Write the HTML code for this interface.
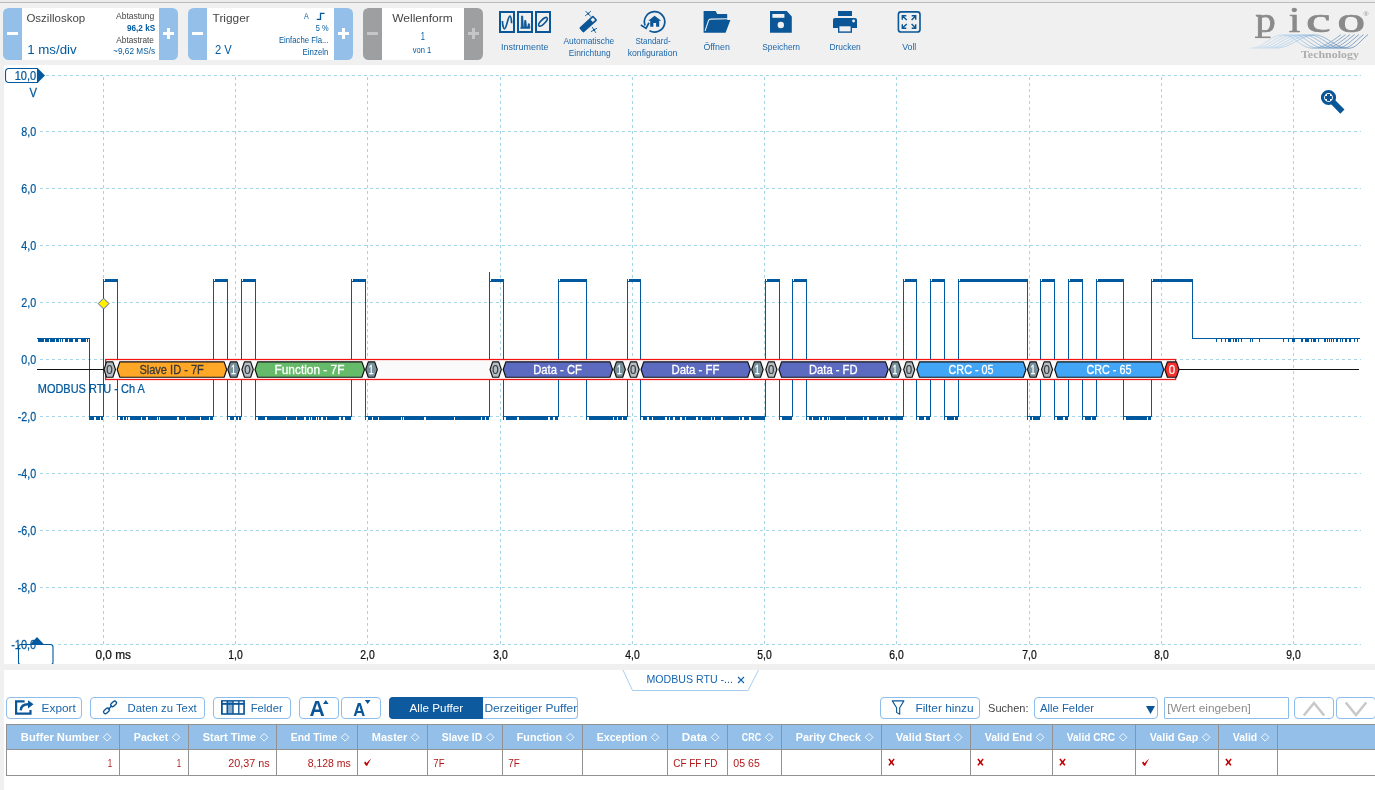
<!DOCTYPE html>
<html><head><meta charset="utf-8"><title>PicoScope</title>
<style>
html,body{margin:0;padding:0}
body{width:1375px;height:790px;background:#f0f0f0;position:relative;overflow:hidden;font-family:"Liberation Sans",sans-serif;}
.abs{position:absolute}
.tb{position:absolute;top:8px;height:52px;background:#fff;border-radius:5.500px;overflow:hidden}
.tb .l,.tb .r{position:absolute;top:0;bottom:0;width:19px;background:#93bfe8}
.tb .l{left:0}.tb .r{right:0}
.tb.g .l,.tb.g .r{background:#9e9fa1}
.tb i{position:absolute;background:#fff;display:block}
.tb.g i{background:#c6c6c6}
.btn{position:absolute;top:697px;height:20px;border:1px solid #8dbdea;border-radius:4px;background:#fff;box-sizing:content-box}
</style></head><body>

<div class="abs" style="left:0;top:0;width:1375px;height:2px;background:#ececec"></div>
<div class="abs" style="left:0;top:2px;width:1375px;height:1px;background:#bcbcbc"></div>
<div class="tb" style="left:3px;width:175px"><div class="l"></div><div class="r"></div>
<i style="left:4px;top:24px;width:11px;height:3px"></i>
<i style="left:160px;top:24.200px;width:11px;height:2.800px"></i><i style="left:164px;top:20.100px;width:3px;height:10.900px"></i></div>
<div class="tb" style="left:188px;width:165px"><div class="l"></div><div class="r"></div>
<i style="left:4px;top:24px;width:11px;height:3px"></i>
<i style="left:150px;top:24.200px;width:11px;height:2.800px"></i><i style="left:154px;top:20.100px;width:3px;height:10.900px"></i></div>
<div class="tb g" style="left:363px;width:120px"><div class="l"></div><div class="r"></div>
<i style="left:4px;top:24px;width:11px;height:3px"></i>
<i style="left:105px;top:24.200px;width:11px;height:2.800px"></i><i style="left:109px;top:20.100px;width:3px;height:10.900px"></i></div>
<svg class="abs" style="left:315px;top:11px" width="12" height="11" viewBox="0 0 12 11"><path d="M1.800 8.300H5.500V2.300H9.500" fill="none" stroke="#00599e" stroke-width="1.300"/></svg>
<svg class="abs" style="left:499px;top:10px" width="52" height="24" viewBox="0 0 52 24">
<g fill="none" stroke="#0b5697" stroke-width="2">
<rect x="1" y="2" width="14" height="20"/><rect x="19" y="2" width="14" height="20"/><rect x="37" y="2" width="14" height="20"/>
<path d="M3.400 11 C3.600 16,4.600 18.800,5.500 18.800 C7.500 18.800,9 6.200,10.900 6.200 C12 6.200,12.400 9,12.600 13.300" stroke-width="1.700"/>
<path d="M21.600 18.300 L22.300 17 L22.500 6 L23.700 6 L24.300 17 L25.400 17.200 L25.700 10.500 L26.900 10.500 L27.400 17 L28.800 17 L29.300 13.800 L30.400 13.800 L30.900 18.300 Z" stroke-width="0.800" fill="#0b5697" stroke-linejoin="round"/>
<ellipse cx="44" cy="11.800" rx="2.100" ry="5.700" transform="rotate(45 44 11.800)" stroke-width="1.600"/>
</g></svg>
<svg class="abs" style="left:570px;top:0" width="40" height="40" viewBox="570 0 40 40">
<g transform="translate(588.200,24.100) rotate(-42.300)"><rect x="-9.450" y="-3.250" width="18.900" height="6.500" rx="1.100" fill="#0b5697"/><rect x="4.700" y="-1.600" width="3.200" height="3.200" fill="#f0f0f0"/></g>
<g stroke="#0b5697" stroke-width="0.900" fill="#0b5697" stroke-linecap="round">
<path d="M585.800 11.300L590.600 16.300M590.600 11.500L585.400 15.700"/><circle cx="588.200" cy="13.800" r="1.050" stroke="none"/>
<path d="M592.300 27.300L595.600 32.500M596.700 28.400L591.300 31.500"/><circle cx="594.100" cy="29.900" r="1.050" stroke="none"/>
</g></svg>
<svg class="abs" style="left:635px;top:0" width="40" height="40" viewBox="635 0 40 40">
<path d="M649.350 30.640A10.200 10.200 0 1 0 645.080 25.560" fill="none" stroke="#0b5697" stroke-width="1.700"/>
<path d="M640.850 25.040L646.060 28.400L648.990 22.750" fill="none" stroke="#0b5697" stroke-width="1.700"/>
<path d="M654.600 15.700L648.200 20.800H650.200V26.700H653.400V22.950H656.100V26.700H659.200V20.800H661.200Z" fill="#0b5697"/>
</svg>
<svg class="abs" style="left:696px;top:0" width="40" height="40" viewBox="696 0 40 40">
<path d="M703.600 11H715.600L717.200 14H727.200V20H730.400L725.600 32.800H703.600Z" fill="#0b5697"/>
<path d="M705.100 30.800L708.500 20.600Q709 19.100 710.600 19.100L727.600 18.700" fill="none" stroke="#f0f0f0" stroke-width="1.100"/>
</svg>
<svg class="abs" style="left:765px;top:0" width="40" height="40" viewBox="765 0 40 40">
<path d="M770 11H786.800L791.800 16.400V32.800H770Z" fill="#0b5697"/><rect x="772.400" y="14" width="12" height="3.800" fill="#f0f0f0"/><circle cx="780.800" cy="25" r="3.200" fill="#f0f0f0"/>
</svg>
<svg class="abs" style="left:832px;top:10px" width="26" height="24" viewBox="0 0 26 24">
<rect x="6" y="1" width="14" height="5" fill="#0b5697"/>
<path d="M3 8H23Q25 8 25 10V18H1V10Q1 8 3 8Z" fill="#0b5697"/>
<rect x="6.700" y="15.600" width="12.600" height="6.500" fill="#f0f0f0" stroke="#0b5697" stroke-width="1.400"/>
<circle cx="21.600" cy="11" r="1.450" fill="#f0f0f0"/>
</svg>
<svg class="abs" style="left:897px;top:10px" width="25" height="24" viewBox="0 0 25 24">
<rect x="1.400" y="1.840" width="21.600" height="20.200" rx="2.600" fill="none" stroke="#0b5697" stroke-width="1.600"/>
<g fill="none" stroke="#0b5697" stroke-width="1.400">
<path d="M9.800 10L5.400 6M5.300 9.700V5.800H9.300 M14.600 10L18.600 6M14.700 5.800H18.700V9.700 M9.800 14L5.400 18M5.300 14.300V18.200H9.300 M14.600 14L18.600 18M18.700 14.300V18.200H14.700"/>
</g></svg>
<svg class="abs" style="left:1245px;top:28px" width="130" height="36" viewBox="0 0 130 36"><defs><linearGradient id="wg" gradientUnits="userSpaceOnUse" x1="0" y1="0" x2="125" y2="0"><stop offset="0" stop-color="#c4dcf3"/><stop offset="0.4" stop-color="#9cc4ea"/><stop offset="0.62" stop-color="#5f93c4"/><stop offset="0.78" stop-color="#3f74a8"/><stop offset="1" stop-color="#356a9c"/></linearGradient></defs><path d="M4.7 20.300 C19.7 20.300,24.8 6.800,37.8 6.800 C49.8 6.800,55.0 20.300,68.0 20.300 C77.0 20.300,87.0 13.500,96.0 6.600" fill="none" stroke="url(#wg)" stroke-width="0.650" opacity="0.900"/><path d="M9.0 20.300 C24.0 20.300,30.1 6.800,43.1 6.800 C55.1 6.800,60.8 20.300,73.8 20.300 C82.8 20.300,91.5 13.500,100.5 6.600" fill="none" stroke="url(#wg)" stroke-width="0.650" opacity="0.900"/><path d="M13.3 20.300 C28.3 20.300,35.4 6.800,48.4 6.800 C60.4 6.800,66.6 20.300,79.6 20.300 C88.6 20.300,96.0 13.500,105.0 6.600" fill="none" stroke="url(#wg)" stroke-width="0.650" opacity="0.900"/><path d="M17.6 20.300 C32.6 20.300,40.7 6.800,53.7 6.800 C65.7 6.800,72.4 20.300,85.4 20.300 C94.4 20.300,100.5 13.500,109.5 6.600" fill="none" stroke="url(#wg)" stroke-width="0.650" opacity="0.900"/><path d="M21.9 20.300 C36.9 20.300,46.0 6.800,59.0 6.800 C71.0 6.800,78.2 20.300,91.2 20.300 C100.2 20.300,105.0 13.500,114.0 6.600" fill="none" stroke="url(#wg)" stroke-width="0.650" opacity="0.900"/><path d="M26.2 20.300 C41.2 20.300,51.3 6.800,64.3 6.800 C76.3 6.800,84.0 20.300,97.0 20.300 C106.0 20.300,109.5 13.500,118.5 6.600" fill="none" stroke="url(#wg)" stroke-width="0.650" opacity="0.900"/><path d="M30.5 20.300 C45.5 20.300,56.6 6.800,69.6 6.800 C81.6 6.800,89.8 20.300,102.8 20.300 C111.8 20.300,114.0 13.500,123.0 6.600" fill="none" stroke="url(#wg)" stroke-width="0.650" opacity="0.900"/></svg>
<div class="abs" style="left:4px;top:65px;width:1371px;height:599px;background:#fff"></div>
<svg class="abs" style="left:0;top:0" width="1375" height="790" viewBox="0 0 1375 790" shape-rendering="crispEdges"><line x1="46" y1="75.5" x2="1361" y2="75.5" stroke="#a4d6e8" stroke-width="1" stroke-dasharray="3 3"/><line x1="40" y1="131.5" x2="1361" y2="131.5" stroke="#a4d6e8" stroke-width="1" stroke-dasharray="3 3"/><line x1="40" y1="188.5" x2="1361" y2="188.5" stroke="#a4d6e8" stroke-width="1" stroke-dasharray="3 3"/><line x1="40" y1="245.5" x2="1361" y2="245.5" stroke="#a4d6e8" stroke-width="1" stroke-dasharray="3 3"/><line x1="40" y1="302.5" x2="1361" y2="302.5" stroke="#a4d6e8" stroke-width="1" stroke-dasharray="3 3"/><line x1="40" y1="359.5" x2="1361" y2="359.5" stroke="#a4d6e8" stroke-width="1" stroke-dasharray="3 3"/><line x1="40" y1="416.5" x2="1361" y2="416.5" stroke="#a4d6e8" stroke-width="1" stroke-dasharray="3 3"/><line x1="40" y1="473.5" x2="1361" y2="473.5" stroke="#a4d6e8" stroke-width="1" stroke-dasharray="3 3"/><line x1="40" y1="530.5" x2="1361" y2="530.5" stroke="#a4d6e8" stroke-width="1" stroke-dasharray="3 3"/><line x1="40" y1="587.5" x2="1361" y2="587.5" stroke="#a4d6e8" stroke-width="1" stroke-dasharray="3 3"/><line x1="58" y1="644.5" x2="1361" y2="644.5" stroke="#a4d6e8" stroke-width="1" stroke-dasharray="3 3"/><line x1="103.5" y1="77" x2="103.5" y2="645" stroke="#a4d6e8" stroke-width="1" stroke-dasharray="3 3"/><line x1="235.5" y1="77" x2="235.5" y2="645" stroke="#a4d6e8" stroke-width="1" stroke-dasharray="3 3"/><line x1="367.5" y1="77" x2="367.5" y2="645" stroke="#a4d6e8" stroke-width="1" stroke-dasharray="3 3"/><line x1="500.5" y1="77" x2="500.5" y2="645" stroke="#a4d6e8" stroke-width="1" stroke-dasharray="3 3"/><line x1="632.5" y1="77" x2="632.5" y2="645" stroke="#a4d6e8" stroke-width="1" stroke-dasharray="3 3"/><line x1="764.5" y1="77" x2="764.5" y2="645" stroke="#a4d6e8" stroke-width="1" stroke-dasharray="3 3"/><line x1="896.5" y1="77" x2="896.5" y2="645" stroke="#a4d6e8" stroke-width="1" stroke-dasharray="3 3"/><line x1="1029.5" y1="77" x2="1029.5" y2="645" stroke="#a4d6e8" stroke-width="1" stroke-dasharray="3 3"/><line x1="1161.5" y1="77" x2="1161.5" y2="645" stroke="#a4d6e8" stroke-width="1" stroke-dasharray="3 3"/><line x1="1293.5" y1="77" x2="1293.5" y2="645" stroke="#a4d6e8" stroke-width="1" stroke-dasharray="3 3"/><rect x="37" y="338" width="53" height="1" fill="#00599e"/><rect x="89" y="338" width="1" height="82" fill="#00599e"/><rect x="89" y="416" width="15" height="1" fill="#00599e"/><rect x="89" y="417" width="14" height="3" fill="#00599e"/><rect x="103" y="279" width="1" height="138" fill="#00599e"/><rect x="103" y="279" width="15" height="3" fill="#00599e"/><rect x="117" y="279" width="1" height="141" fill="#00599e"/><rect x="117" y="416" width="97" height="1" fill="#00599e"/><rect x="117" y="417" width="96" height="3" fill="#00599e"/><rect x="213" y="279" width="1" height="138" fill="#00599e"/><rect x="213" y="279" width="15" height="3" fill="#00599e"/><rect x="227" y="279" width="1" height="141" fill="#00599e"/><rect x="227" y="416" width="15" height="1" fill="#00599e"/><rect x="227" y="417" width="14" height="3" fill="#00599e"/><rect x="241" y="279" width="1" height="138" fill="#00599e"/><rect x="241" y="279" width="15" height="3" fill="#00599e"/><rect x="255" y="279" width="1" height="141" fill="#00599e"/><rect x="255" y="416" width="97" height="1" fill="#00599e"/><rect x="255" y="417" width="96" height="3" fill="#00599e"/><rect x="351" y="279" width="1" height="138" fill="#00599e"/><rect x="351" y="279" width="15" height="3" fill="#00599e"/><rect x="365" y="279" width="1" height="141" fill="#00599e"/><rect x="365" y="416" width="125" height="1" fill="#00599e"/><rect x="365" y="417" width="124" height="3" fill="#00599e"/><rect x="489" y="279" width="1" height="138" fill="#00599e"/><rect x="489" y="279" width="15" height="3" fill="#00599e"/><rect x="503" y="279" width="1" height="141" fill="#00599e"/><rect x="503" y="416" width="56" height="1" fill="#00599e"/><rect x="503" y="417" width="55" height="3" fill="#00599e"/><rect x="558" y="279" width="1" height="138" fill="#00599e"/><rect x="558" y="279" width="29" height="3" fill="#00599e"/><rect x="586" y="279" width="1" height="141" fill="#00599e"/><rect x="586" y="416" width="42" height="1" fill="#00599e"/><rect x="586" y="417" width="41" height="3" fill="#00599e"/><rect x="627" y="279" width="1" height="138" fill="#00599e"/><rect x="627" y="279" width="14" height="3" fill="#00599e"/><rect x="640" y="279" width="1" height="141" fill="#00599e"/><rect x="640" y="416" width="126" height="1" fill="#00599e"/><rect x="640" y="417" width="125" height="3" fill="#00599e"/><rect x="765" y="279" width="1" height="138" fill="#00599e"/><rect x="765" y="279" width="15" height="3" fill="#00599e"/><rect x="779" y="279" width="1" height="141" fill="#00599e"/><rect x="779" y="416" width="14" height="1" fill="#00599e"/><rect x="779" y="417" width="13" height="3" fill="#00599e"/><rect x="792" y="279" width="1" height="138" fill="#00599e"/><rect x="792" y="279" width="15" height="3" fill="#00599e"/><rect x="806" y="279" width="1" height="141" fill="#00599e"/><rect x="806" y="416" width="98" height="1" fill="#00599e"/><rect x="806" y="417" width="97" height="3" fill="#00599e"/><rect x="903" y="279" width="1" height="138" fill="#00599e"/><rect x="903" y="279" width="14" height="3" fill="#00599e"/><rect x="916" y="279" width="1" height="141" fill="#00599e"/><rect x="916" y="416" width="15" height="1" fill="#00599e"/><rect x="916" y="417" width="14" height="3" fill="#00599e"/><rect x="930" y="279" width="1" height="138" fill="#00599e"/><rect x="930" y="279" width="15" height="3" fill="#00599e"/><rect x="944" y="279" width="1" height="141" fill="#00599e"/><rect x="944" y="416" width="15" height="1" fill="#00599e"/><rect x="944" y="417" width="14" height="3" fill="#00599e"/><rect x="958" y="279" width="1" height="138" fill="#00599e"/><rect x="958" y="279" width="70" height="3" fill="#00599e"/><rect x="1027" y="279" width="1" height="141" fill="#00599e"/><rect x="1027" y="416" width="14" height="1" fill="#00599e"/><rect x="1027" y="417" width="13" height="3" fill="#00599e"/><rect x="1040" y="279" width="1" height="138" fill="#00599e"/><rect x="1040" y="279" width="15" height="3" fill="#00599e"/><rect x="1054" y="279" width="1" height="141" fill="#00599e"/><rect x="1054" y="416" width="15" height="1" fill="#00599e"/><rect x="1054" y="417" width="14" height="3" fill="#00599e"/><rect x="1068" y="279" width="1" height="138" fill="#00599e"/><rect x="1068" y="279" width="15" height="3" fill="#00599e"/><rect x="1082" y="279" width="1" height="141" fill="#00599e"/><rect x="1082" y="416" width="15" height="1" fill="#00599e"/><rect x="1082" y="417" width="14" height="3" fill="#00599e"/><rect x="1096" y="279" width="1" height="138" fill="#00599e"/><rect x="1096" y="279" width="28" height="3" fill="#00599e"/><rect x="1123" y="279" width="1" height="141" fill="#00599e"/><rect x="1123" y="416" width="29" height="1" fill="#00599e"/><rect x="1123" y="417" width="28" height="3" fill="#00599e"/><rect x="1151" y="279" width="1" height="138" fill="#00599e"/><rect x="1151" y="279" width="42" height="3" fill="#00599e"/><rect x="1192" y="279" width="1" height="60" fill="#00599e"/><rect x="1192" y="338" width="168" height="1" fill="#00599e"/><rect x="94" y="417" width="2" height="3" fill="#fff"/><rect x="100" y="417" width="1" height="3" fill="#fff"/><rect x="104" y="279" width="1" height="2" fill="#fff"/><rect x="118" y="417" width="2" height="3" fill="#fff"/><rect x="123" y="417" width="1" height="3" fill="#fff"/><rect x="126" y="417" width="1" height="3" fill="#fff"/><rect x="128" y="417" width="2" height="3" fill="#fff"/><rect x="141" y="417" width="1" height="3" fill="#fff"/><rect x="146" y="417" width="2" height="3" fill="#fff"/><rect x="157" y="417" width="1" height="3" fill="#fff"/><rect x="159" y="417" width="1" height="3" fill="#fff"/><rect x="177" y="417" width="2" height="3" fill="#fff"/><rect x="185" y="417" width="1" height="3" fill="#fff"/><rect x="200" y="417" width="1" height="3" fill="#fff"/><rect x="209" y="417" width="1" height="3" fill="#fff"/><rect x="214" y="279" width="1" height="2" fill="#fff"/><rect x="228" y="417" width="2" height="3" fill="#fff"/><rect x="234" y="417" width="2" height="3" fill="#fff"/><rect x="238" y="417" width="1" height="3" fill="#fff"/><rect x="242" y="279" width="1" height="2" fill="#fff"/><rect x="256" y="417" width="2" height="3" fill="#fff"/><rect x="265" y="417" width="2" height="3" fill="#fff"/><rect x="286" y="417" width="1" height="3" fill="#fff"/><rect x="296" y="417" width="1" height="3" fill="#fff"/><rect x="304" y="417" width="2" height="3" fill="#fff"/><rect x="309" y="417" width="1" height="3" fill="#fff"/><rect x="311" y="417" width="1" height="3" fill="#fff"/><rect x="316" y="417" width="1" height="3" fill="#fff"/><rect x="318" y="417" width="1" height="3" fill="#fff"/><rect x="321" y="417" width="2" height="3" fill="#fff"/><rect x="326" y="417" width="1" height="3" fill="#fff"/><rect x="339" y="417" width="2" height="3" fill="#fff"/><rect x="343" y="417" width="2" height="3" fill="#fff"/><rect x="352" y="279" width="1" height="2" fill="#fff"/><rect x="366" y="417" width="2" height="3" fill="#fff"/><rect x="372" y="417" width="1" height="3" fill="#fff"/><rect x="378" y="417" width="1" height="3" fill="#fff"/><rect x="401" y="417" width="1" height="3" fill="#fff"/><rect x="403" y="417" width="1" height="3" fill="#fff"/><rect x="424" y="417" width="2" height="3" fill="#fff"/><rect x="454" y="417" width="1" height="3" fill="#fff"/><rect x="481" y="417" width="1" height="3" fill="#fff"/><rect x="485" y="417" width="1" height="3" fill="#fff"/><rect x="490" y="279" width="1" height="2" fill="#fff"/><rect x="504" y="417" width="2" height="3" fill="#fff"/><rect x="517" y="417" width="2" height="3" fill="#fff"/><rect x="548" y="417" width="2" height="3" fill="#fff"/><rect x="553" y="417" width="2" height="3" fill="#fff"/><rect x="559" y="279" width="1" height="2" fill="#fff"/><rect x="587" y="417" width="2" height="3" fill="#fff"/><rect x="613" y="417" width="1" height="3" fill="#fff"/><rect x="617" y="417" width="1" height="3" fill="#fff"/><rect x="622" y="417" width="1" height="3" fill="#fff"/><rect x="628" y="279" width="1" height="2" fill="#fff"/><rect x="641" y="417" width="2" height="3" fill="#fff"/><rect x="647" y="417" width="2" height="3" fill="#fff"/><rect x="652" y="417" width="1" height="3" fill="#fff"/><rect x="665" y="417" width="2" height="3" fill="#fff"/><rect x="669" y="417" width="1" height="3" fill="#fff"/><rect x="673" y="417" width="2" height="3" fill="#fff"/><rect x="680" y="417" width="2" height="3" fill="#fff"/><rect x="685" y="417" width="1" height="3" fill="#fff"/><rect x="696" y="417" width="2" height="3" fill="#fff"/><rect x="701" y="417" width="1" height="3" fill="#fff"/><rect x="711" y="417" width="1" height="3" fill="#fff"/><rect x="714" y="417" width="1" height="3" fill="#fff"/><rect x="721" y="417" width="2" height="3" fill="#fff"/><rect x="739" y="417" width="1" height="3" fill="#fff"/><rect x="742" y="417" width="2" height="3" fill="#fff"/><rect x="749" y="417" width="2" height="3" fill="#fff"/><rect x="766" y="279" width="1" height="2" fill="#fff"/><rect x="780" y="417" width="2" height="3" fill="#fff"/><rect x="793" y="279" width="1" height="2" fill="#fff"/><rect x="807" y="417" width="2" height="3" fill="#fff"/><rect x="812" y="417" width="1" height="3" fill="#fff"/><rect x="819" y="417" width="1" height="3" fill="#fff"/><rect x="822" y="417" width="2" height="3" fill="#fff"/><rect x="827" y="417" width="1" height="3" fill="#fff"/><rect x="829" y="417" width="1" height="3" fill="#fff"/><rect x="845" y="417" width="1" height="3" fill="#fff"/><rect x="863" y="417" width="1" height="3" fill="#fff"/><rect x="867" y="417" width="2" height="3" fill="#fff"/><rect x="877" y="417" width="1" height="3" fill="#fff"/><rect x="884" y="417" width="1" height="3" fill="#fff"/><rect x="888" y="417" width="2" height="3" fill="#fff"/><rect x="904" y="279" width="1" height="2" fill="#fff"/><rect x="917" y="417" width="2" height="3" fill="#fff"/><rect x="924" y="417" width="2" height="3" fill="#fff"/><rect x="931" y="279" width="1" height="2" fill="#fff"/><rect x="945" y="417" width="2" height="3" fill="#fff"/><rect x="954" y="417" width="1" height="3" fill="#fff"/><rect x="959" y="279" width="1" height="2" fill="#fff"/><rect x="1028" y="417" width="2" height="3" fill="#fff"/><rect x="1032" y="417" width="1" height="3" fill="#fff"/><rect x="1041" y="279" width="1" height="2" fill="#fff"/><rect x="1055" y="417" width="2" height="3" fill="#fff"/><rect x="1063" y="417" width="2" height="3" fill="#fff"/><rect x="1069" y="279" width="1" height="2" fill="#fff"/><rect x="1083" y="417" width="2" height="3" fill="#fff"/><rect x="1091" y="417" width="1" height="3" fill="#fff"/><rect x="1097" y="279" width="1" height="2" fill="#fff"/><rect x="1124" y="417" width="2" height="3" fill="#fff"/><rect x="1147" y="417" width="1" height="3" fill="#fff"/><rect x="1152" y="279" width="1" height="2" fill="#fff"/><rect x="38" y="339" width="6" height="3" fill="#00599e"/><rect x="45" y="339" width="4" height="3" fill="#00599e"/><rect x="50" y="339" width="5" height="3" fill="#00599e"/><rect x="56" y="339" width="3" height="3" fill="#00599e"/><rect x="60" y="339" width="1" height="3" fill="#00599e"/><rect x="62" y="339" width="1" height="3" fill="#00599e"/><rect x="65" y="339" width="3" height="3" fill="#00599e"/><rect x="69" y="339" width="4" height="3" fill="#00599e"/><rect x="75" y="339" width="3" height="3" fill="#00599e"/><rect x="81" y="339" width="5" height="3" fill="#00599e"/><rect x="87" y="339" width="1" height="3" fill="#00599e"/><rect x="1216" y="339" width="1" height="3" fill="#00599e"/><rect x="1221" y="339" width="1" height="3" fill="#00599e"/><rect x="1225" y="339" width="1" height="3" fill="#00599e"/><rect x="1228" y="339" width="3" height="3" fill="#00599e"/><rect x="1233" y="339" width="1" height="3" fill="#00599e"/><rect x="1235" y="339" width="2" height="3" fill="#00599e"/><rect x="1238" y="339" width="1" height="3" fill="#00599e"/><rect x="1241" y="339" width="1" height="3" fill="#00599e"/><rect x="1250" y="339" width="1" height="3" fill="#00599e"/><rect x="1252" y="339" width="1" height="3" fill="#00599e"/><rect x="1259" y="339" width="1" height="3" fill="#00599e"/><rect x="1283" y="339" width="1" height="3" fill="#00599e"/><rect x="1288" y="339" width="1" height="3" fill="#00599e"/><rect x="1292" y="339" width="3" height="3" fill="#00599e"/><rect x="1301" y="339" width="2" height="3" fill="#00599e"/><rect x="1305" y="339" width="4" height="3" fill="#00599e"/><rect x="1311" y="339" width="1" height="3" fill="#00599e"/><rect x="1313" y="339" width="3" height="3" fill="#00599e"/><rect x="1318" y="339" width="1" height="3" fill="#00599e"/><rect x="1324" y="339" width="2" height="3" fill="#00599e"/><rect x="1327" y="339" width="1" height="3" fill="#00599e"/><rect x="1329" y="339" width="1" height="3" fill="#00599e"/><rect x="1331" y="339" width="1" height="3" fill="#00599e"/><rect x="1333" y="339" width="1" height="3" fill="#00599e"/><rect x="1336" y="339" width="2" height="3" fill="#00599e"/><rect x="1340" y="339" width="1" height="3" fill="#00599e"/><rect x="1342" y="339" width="1" height="3" fill="#00599e"/><rect x="1345" y="339" width="2" height="3" fill="#00599e"/><rect x="1349" y="339" width="2" height="3" fill="#00599e"/><rect x="1354" y="339" width="1" height="3" fill="#00599e"/><rect x="1357" y="339" width="1" height="3" fill="#00599e"/><rect x="489" y="272" width="1" height="8" fill="#00599e"/><rect x="37" y="369" width="1322" height="1" fill="#111"/></svg>
<svg class="abs" style="left:0;top:0" width="1375" height="790" viewBox="0 0 1375 790"><rect x="105.600" y="359.500" width="1070" height="20" fill="#fafafa" stroke="#f41414" stroke-width="1.250"/><path d="M104.00999999999999 369.55L106.60999999999999 361.9H112.88000000000001L115.48 369.55L112.88000000000001 377.2H106.60999999999999Z" fill="#b4bec4" stroke="#111" stroke-width="1.150" stroke-linejoin="round"/><path d="M117.197 369.55L119.797 361.9H224.12L226.72 369.55L224.12 377.2H119.797Z" fill="#ffa726" stroke="#111" stroke-width="1.150" stroke-linejoin="round"/><path d="M227.793 369.55L230.393 361.9H236.9L239.5 369.55L236.9 377.2H230.393Z" fill="#78909c" stroke="#111" stroke-width="1.150" stroke-linejoin="round"/><path d="M241.88 369.55L244.48 361.9H250.67999999999998L253.27999999999997 369.55L250.67999999999998 377.2H244.48Z" fill="#b4bec4" stroke="#111" stroke-width="1.150" stroke-linejoin="round"/><path d="M255.067 369.55L257.66700000000003 361.9H361.91999999999996L364.52 369.55L361.91999999999996 377.2H257.66700000000003Z" fill="#66bb6a" stroke="#111" stroke-width="1.150" stroke-linejoin="round"/><path d="M365.66300000000007 369.55L368.2630000000001 361.9H374.69999999999993L377.29999999999995 369.55L374.69999999999993 377.2H368.2630000000001Z" fill="#78909c" stroke="#111" stroke-width="1.150" stroke-linejoin="round"/><path d="M490.04600000000005 369.55L492.6460000000001 361.9H498.71999999999997L501.32 369.55L498.71999999999997 377.2H492.6460000000001Z" fill="#b4bec4" stroke="#111" stroke-width="1.150" stroke-linejoin="round"/><path d="M503.23300000000006 369.55L505.8330000000001 361.9H609.9599999999999L612.56 369.55L609.9599999999999 377.2H505.8330000000001Z" fill="#5c6bc0" stroke="#111" stroke-width="1.150" stroke-linejoin="round"/><path d="M613.829 369.55L616.429 361.9H622.74L625.34 369.55L622.74 377.2H616.429Z" fill="#78909c" stroke="#111" stroke-width="1.150" stroke-linejoin="round"/><path d="M627.916 369.55L630.5160000000001 361.9H636.52L639.12 369.55L636.52 377.2H630.5160000000001Z" fill="#b4bec4" stroke="#111" stroke-width="1.150" stroke-linejoin="round"/><path d="M641.103 369.55L643.703 361.9H747.76L750.36 369.55L747.76 377.2H643.703Z" fill="#5c6bc0" stroke="#111" stroke-width="1.150" stroke-linejoin="round"/><path d="M751.699 369.55L754.299 361.9H760.54L763.14 369.55L760.54 377.2H754.299Z" fill="#78909c" stroke="#111" stroke-width="1.150" stroke-linejoin="round"/><path d="M765.7860000000001 369.55L768.3860000000001 361.9H774.3199999999999L776.92 369.55L774.3199999999999 377.2H768.3860000000001Z" fill="#b4bec4" stroke="#111" stroke-width="1.150" stroke-linejoin="round"/><path d="M778.973 369.55L781.573 361.9H885.56L888.16 369.55L885.56 377.2H781.573Z" fill="#5c6bc0" stroke="#111" stroke-width="1.150" stroke-linejoin="round"/><path d="M889.569 369.55L892.169 361.9H898.34L900.94 369.55L898.34 377.2H892.169Z" fill="#78909c" stroke="#111" stroke-width="1.150" stroke-linejoin="round"/><path d="M903.6560000000001 369.55L906.2560000000001 361.9H912.12L914.72 369.55L912.12 377.2H906.2560000000001Z" fill="#b4bec4" stroke="#111" stroke-width="1.150" stroke-linejoin="round"/><path d="M916.843 369.55L919.443 361.9H1023.36L1025.96 369.55L1023.36 377.2H919.443Z" fill="#42a5f5" stroke="#111" stroke-width="1.150" stroke-linejoin="round"/><path d="M1027.439 369.55L1030.039 361.9H1036.14L1038.74 369.55L1036.14 377.2H1030.039Z" fill="#78909c" stroke="#111" stroke-width="1.150" stroke-linejoin="round"/><path d="M1041.526 369.55L1044.126 361.9H1049.92L1052.52 369.55L1049.92 377.2H1044.126Z" fill="#b4bec4" stroke="#111" stroke-width="1.150" stroke-linejoin="round"/><path d="M1054.7130000000002 369.55L1057.313 361.9H1161.16L1163.76 369.55L1161.16 377.2H1057.313Z" fill="#42a5f5" stroke="#111" stroke-width="1.150" stroke-linejoin="round"/><path d="M1164.8090000000002 369.55L1167.409 361.9H1176.44L1179.04 369.55L1176.44 377.2H1167.409Z" fill="#f5302e" stroke="#111" stroke-width="1.150" stroke-linejoin="round"/></svg>
<svg class="abs" style="left:97px;top:297px" width="13" height="13" viewBox="0 0 13 13"><path d="M6.600 1.200L12 6.600L6.600 12L1.200 6.600Z" fill="#ffee00" stroke="#5068b4" stroke-width="1"/></svg>
<svg class="abs" style="left:4px;top:66px" width="44" height="20" viewBox="0 0 44 20">
<path d="M5 2.500H33.500V16.500H5Q1.500 16.500 1.500 13V6Q1.500 2.500 5 2.500Z" fill="#fff" stroke="#00599e" stroke-width="1.100"/>
<path d="M33.500 2L41 9.500L33.500 17Z" fill="#00599e"/></svg>
<svg class="abs" style="left:14px;top:634px" width="44" height="30" viewBox="0 0 44 30">
<path d="M16 10.500L23 3L30 10.500Z" fill="#00599e"/>
<path d="M6.500 30.500Q4.500 30.500 4.500 28.500V13Q4.500 10.500 7 10.500H36.500Q39 10.500 39 13V28.500Q39 30.500 37 30.500" fill="none" stroke="#00599e" stroke-width="1.100"/></svg>
<svg class="abs" style="left:1319px;top:88px" width="28" height="28" viewBox="0 0 28 28">
<path d="M13 13L23.400 23.600" stroke="#0b5697" stroke-width="5.800" stroke-linecap="butt"/>
<circle cx="9.500" cy="9.500" r="6" fill="#fff" stroke="#0b5697" stroke-width="3.200"/>
<path d="M6.100 9.500H12.900M9.500 6.100V12.900" stroke="#0b5697" stroke-width="3"/></svg>
<div class="abs" style="left:4px;top:670px;width:1371px;height:120px;background:#fff"></div>
<svg class="abs" style="left:615px;top:668px" width="150" height="26" viewBox="0 0 150 26">
<path d="M8 2L17.500 22.500H133L143.500 2" fill="#fff" stroke="#a9cdf0" stroke-width="1"/></svg>
<svg class="abs" style="left:737px;top:676px" width="8" height="8" viewBox="0 0 8 8"><path d="M1 1L7 7M7 1L1 7" stroke="#1565b0" stroke-width="1.200"/></svg>
<div class="btn" style="left:6px;width:74px;"></div>
<div class="btn" style="left:90px;width:113px;"></div>
<div class="btn" style="left:213px;width:76px;"></div>
<div class="btn" style="left:299px;width:38px;"></div>
<div class="btn" style="left:341px;width:38px;"></div>
<svg class="abs" style="left:0;top:690px" width="400" height="35" viewBox="0 690 400 35">
<path d="M24.600 701.300H16.100V713.700H30.500V710" fill="none" stroke="#0b5697" stroke-width="2.200"/>
<path d="M20.700 710.300C21 706 23.500 704.300 28.300 704.300" fill="none" stroke="#0b5697" stroke-width="2.400"/>
<path d="M28 700.200L33.500 704.300L28 708.500Z" fill="#0b5697"/>
<g fill="none" stroke="#0b5697" stroke-width="1.400"><rect x="110.300" y="702.100" width="6.600" height="3.600" rx="1.800" transform="rotate(-42 113.600 703.900)"/><rect x="103.200" y="709.100" width="6.600" height="3.600" rx="1.800" transform="rotate(-42 106.500 710.900)"/><path d="M108.200 709.400L112 705.600"/></g>
<rect x="221" y="700.100" width="23.900" height="14.700" fill="#0b5697"/>
<g fill="#fff"><rect x="222.800" y="701.500" width="3.700" height="1.400"/><rect x="233.700" y="701.500" width="4.400" height="1.400"/><rect x="239.500" y="701.500" width="3.700" height="1.400"/>
<rect x="222.800" y="704.800" width="3.700" height="8.400"/><rect x="233.700" y="704.800" width="4.400" height="8.400"/><rect x="239.500" y="704.800" width="3.700" height="8.400"/></g>
<g fill="#86abd0"><rect x="228.100" y="701.500" width="4.200" height="1.400"/><rect x="228.100" y="704.800" width="4.200" height="8.400"/></g>
<path d="M323 703.900L325.800 700.100L328.600 703.900Z M364.800 700.100H370.600L367.700 703.900Z" fill="#0b5697"/>
</svg>
<div class="abs" style="left:389px;top:697px;width:94px;height:22px;background:#0d5a9f;border-radius:4px 0 0 4px"></div>
<div class="abs" style="left:483px;top:697px;width:94px;height:20px;border:1px solid #8dbdea;border-left:none;border-radius:0 4px 4px 0;background:#fff"></div>
<div class="btn" style="left:880px;width:98px;"><svg class="abs" style="left:10px;top:2px" width="16" height="17" viewBox="0 0 16 17"><path d="M1.300 0.900H12.900L8.700 7.800V14.300L5.600 12.400V7.800Z" fill="none" stroke="#0b5697" stroke-width="1.100" stroke-linejoin="round"/></svg></div>
<div class="btn" style="left:1034px;width:122px;"><svg class="abs" style="left:110.500px;top:7.500px" width="10" height="9"><path d="M0 0H9L4.500 8Z" fill="#0b5697"/></svg></div>
<div class="btn" style="left:1164px;width:123px;border-radius:1px"></div>
<div class="btn" style="left:1294px;width:38px;"><svg class="abs" style="left:7px;top:2.500px" width="24" height="16" viewBox="0 0 24 16"><path d="M1.800 14.500L12 2L22.200 14.500" fill="none" stroke="#c8c8c8" stroke-width="2.500"/></svg></div>
<div class="btn" style="left:1336px;width:38px;"><svg class="abs" style="left:7px;top:2.500px" width="24" height="16" viewBox="0 0 24 16"><path d="M1.800 1.500L12 14L22.200 1.500" fill="none" stroke="#c8c8c8" stroke-width="2.500"/></svg></div>
<svg class="abs" style="left:0;top:0" width="1375" height="790" viewBox="0 0 1375 790" shape-rendering="crispEdges"><rect x="6" y="724" width="1369" height="26" fill="#93bfe8"/><rect x="6" y="750" width="1369" height="25" fill="#fff"/><rect x="6" y="724" width="1369" height="1" fill="#929292"/><rect x="6" y="749" width="1369" height="1" fill="#929292"/><rect x="6" y="775" width="1369" height="1" fill="#929292"/><rect x="6" y="724" width="1" height="52" fill="#929292"/><rect x="119" y="724" width="1" height="52" fill="#929292"/><rect x="188" y="724" width="1" height="52" fill="#929292"/><rect x="276" y="724" width="1" height="52" fill="#929292"/><rect x="357" y="724" width="1" height="52" fill="#929292"/><rect x="427" y="724" width="1" height="52" fill="#929292"/><rect x="502" y="724" width="1" height="52" fill="#929292"/><rect x="582" y="724" width="1" height="52" fill="#929292"/><rect x="667" y="724" width="1" height="52" fill="#929292"/><rect x="727" y="724" width="1" height="52" fill="#929292"/><rect x="781" y="724" width="1" height="52" fill="#929292"/><rect x="881" y="724" width="1" height="52" fill="#929292"/><rect x="970" y="724" width="1" height="52" fill="#929292"/><rect x="1052" y="724" width="1" height="52" fill="#929292"/><rect x="1135" y="724" width="1" height="52" fill="#929292"/><rect x="1218" y="724" width="1" height="52" fill="#929292"/><rect x="1277" y="724" width="1" height="52" fill="#929292"/></svg>
<svg class="abs" style="left:0;top:0" width="1375" height="790" viewBox="0 0 1375 790"><path d="M103.3 737.3L107.1 733.5L110.89999999999999 737.3L107.1 741.0999999999999Z" fill="none" stroke="#fff" stroke-width="0.900"/><path d="M172.29999999999998 737.3L176.1 733.5L179.9 737.3L176.1 741.0999999999999Z" fill="none" stroke="#fff" stroke-width="0.900"/><path d="M260.3 737.3L264.1 733.5L267.90000000000003 737.3L264.1 741.0999999999999Z" fill="none" stroke="#fff" stroke-width="0.900"/><path d="M341.3 737.3L345.1 733.5L348.90000000000003 737.3L345.1 741.0999999999999Z" fill="none" stroke="#fff" stroke-width="0.900"/><path d="M411.3 737.3L415.1 733.5L418.90000000000003 737.3L415.1 741.0999999999999Z" fill="none" stroke="#fff" stroke-width="0.900"/><path d="M364.0 762.8L365.3 761.5L366.6 763.3Q368.5 760.3 371.2 758.8Q368.8 762.3 367.2 765.8L366.0 765.8Z" fill="#c00000"/><path d="M486.3 737.3L490.1 733.5L493.90000000000003 737.3L490.1 741.0999999999999Z" fill="none" stroke="#fff" stroke-width="0.900"/><path d="M566.3000000000001 737.3L570.1 733.5L573.9 737.3L570.1 741.0999999999999Z" fill="none" stroke="#fff" stroke-width="0.900"/><path d="M651.3000000000001 737.3L655.1 733.5L658.9 737.3L655.1 741.0999999999999Z" fill="none" stroke="#fff" stroke-width="0.900"/><path d="M711.3000000000001 737.3L715.1 733.5L718.9 737.3L715.1 741.0999999999999Z" fill="none" stroke="#fff" stroke-width="0.900"/><path d="M765.3000000000001 737.3L769.1 733.5L772.9 737.3L769.1 741.0999999999999Z" fill="none" stroke="#fff" stroke-width="0.900"/><path d="M865.3000000000001 737.3L869.1 733.5L872.9 737.3L869.1 741.0999999999999Z" fill="none" stroke="#fff" stroke-width="0.900"/><path d="M954.3000000000001 737.3L958.1 733.5L961.9 737.3L958.1 741.0999999999999Z" fill="none" stroke="#fff" stroke-width="0.900"/><path d="M888.3 759.2L889.5 758.6L891.5 761L893.6999999999999 758.4L894.6999999999999 759.2L892.5999999999999 762.2L894.5 765L893.1999999999999 765.8L891.4 763.4L889.5 765.8L888.3 765L890.4 762.2Z" fill="#c00000"/><path d="M1036.3 737.3L1040.1 733.5L1043.8999999999999 737.3L1040.1 741.0999999999999Z" fill="none" stroke="#fff" stroke-width="0.900"/><path d="M977.3 759.2L978.5 758.6L980.5 761L982.6999999999999 758.4L983.6999999999999 759.2L981.5999999999999 762.2L983.5 765L982.1999999999999 765.8L980.4 763.4L978.5 765.8L977.3 765L979.4 762.2Z" fill="#c00000"/><path d="M1119.3 737.3L1123.1 733.5L1126.8999999999999 737.3L1123.1 741.0999999999999Z" fill="none" stroke="#fff" stroke-width="0.900"/><path d="M1059.3 759.2L1060.5 758.6L1062.5 761L1064.7 758.4L1065.7 759.2L1063.6 762.2L1065.5 765L1064.2 765.8L1062.3999999999999 763.4L1060.5 765.8L1059.3 765L1061.3999999999999 762.2Z" fill="#c00000"/><path d="M1202.3 737.3L1206.1 733.5L1209.8999999999999 737.3L1206.1 741.0999999999999Z" fill="none" stroke="#fff" stroke-width="0.900"/><path d="M1142.0 762.8L1143.3 761.5L1144.6 763.3Q1146.5 760.3 1149.2 758.8Q1146.8 762.3 1145.2 765.8L1144.0 765.8Z" fill="#c00000"/><path d="M1261.3 737.3L1265.1 733.5L1268.8999999999999 737.3L1265.1 741.0999999999999Z" fill="none" stroke="#fff" stroke-width="0.900"/><path d="M1225.3 759.2L1226.5 758.6L1228.5 761L1230.7 758.4L1231.7 759.2L1229.6 762.2L1231.5 765L1230.2 765.8L1228.3999999999999 763.4L1226.5 765.8L1225.3 765L1227.3999999999999 762.2Z" fill="#c00000"/></svg>
<svg class="abs" style="left:0;top:0;will-change:transform" width="1375" height="790" viewBox="0 0 1375 790"><text transform="translate(106.34,374.00) scale(0.9610,1)" font-family="Liberation Sans, sans-serif" font-size="12" fill="#3a3a3a" stroke="#3a3a3a" stroke-width="0.2">0</text>
<text transform="translate(139.41,374.00) scale(0.9212,1)" font-family="Liberation Sans, sans-serif" font-size="12" fill="#3a3a3a" stroke="#3a3a3a" stroke-width="0.3">Slave ID - 7F</text>
<text transform="translate(230.95,374.00) scale(0.7200,1)" font-family="Liberation Sans, sans-serif" font-size="12" fill="#fff" stroke="#fff" stroke-width="0.3">1</text>
<text transform="translate(244.18,374.00) scale(0.9610,1)" font-family="Liberation Sans, sans-serif" font-size="12" fill="#3a3a3a" stroke="#3a3a3a" stroke-width="0.2">0</text>
<text transform="translate(274.54,374.00) scale(0.9885,1)" font-family="Liberation Sans, sans-serif" font-size="12" fill="#fff" stroke="#fff" stroke-width="0.3">Function - 7F</text>
<text transform="translate(368.78,374.00) scale(0.7200,1)" font-family="Liberation Sans, sans-serif" font-size="12" fill="#fff" stroke="#fff" stroke-width="0.3">1</text>
<text transform="translate(492.28,374.00) scale(0.9610,1)" font-family="Liberation Sans, sans-serif" font-size="12" fill="#3a3a3a" stroke="#3a3a3a" stroke-width="0.2">0</text>
<text transform="translate(533.25,374.00) scale(0.9362,1)" font-family="Liberation Sans, sans-serif" font-size="12" fill="#fff" stroke="#fff" stroke-width="0.3">Data - CF</text>
<text transform="translate(616.89,374.00) scale(0.7200,1)" font-family="Liberation Sans, sans-serif" font-size="12" fill="#fff" stroke="#fff" stroke-width="0.3">1</text>
<text transform="translate(630.12,374.00) scale(0.9610,1)" font-family="Liberation Sans, sans-serif" font-size="12" fill="#3a3a3a" stroke="#3a3a3a" stroke-width="0.2">0</text>
<text transform="translate(671.43,374.00) scale(0.9473,1)" font-family="Liberation Sans, sans-serif" font-size="12" fill="#fff" stroke="#fff" stroke-width="0.3">Data - FF</text>
<text transform="translate(754.72,374.00) scale(0.7200,1)" font-family="Liberation Sans, sans-serif" font-size="12" fill="#fff" stroke="#fff" stroke-width="0.3">1</text>
<text transform="translate(767.95,374.00) scale(0.9610,1)" font-family="Liberation Sans, sans-serif" font-size="12" fill="#3a3a3a" stroke="#3a3a3a" stroke-width="0.2">0</text>
<text transform="translate(808.97,374.00) scale(0.9343,1)" font-family="Liberation Sans, sans-serif" font-size="12" fill="#fff" stroke="#fff" stroke-width="0.3">Data - FD</text>
<text transform="translate(892.56,374.00) scale(0.7200,1)" font-family="Liberation Sans, sans-serif" font-size="12" fill="#fff" stroke="#fff" stroke-width="0.3">1</text>
<text transform="translate(905.79,374.00) scale(0.9610,1)" font-family="Liberation Sans, sans-serif" font-size="12" fill="#3a3a3a" stroke="#3a3a3a" stroke-width="0.2">0</text>
<text transform="translate(948.55,374.00) scale(0.9018,1)" font-family="Liberation Sans, sans-serif" font-size="12" fill="#fff" stroke="#fff" stroke-width="0.3">CRC - 05</text>
<text transform="translate(1030.39,374.00) scale(0.7200,1)" font-family="Liberation Sans, sans-serif" font-size="12" fill="#fff" stroke="#fff" stroke-width="0.3">1</text>
<text transform="translate(1043.62,374.00) scale(0.9610,1)" font-family="Liberation Sans, sans-serif" font-size="12" fill="#3a3a3a" stroke="#3a3a3a" stroke-width="0.2">0</text>
<text transform="translate(1086.39,374.00) scale(0.9018,1)" font-family="Liberation Sans, sans-serif" font-size="12" fill="#fff" stroke="#fff" stroke-width="0.3">CRC - 65</text>
<text transform="translate(1168.72,374.00) scale(0.9610,1)" font-family="Liberation Sans, sans-serif" font-size="12" fill="#fff" stroke="#fff" stroke-width="0.2">0</text>
<text transform="translate(21.30,135.60) scale(0.8576,1)" font-family="Liberation Sans, sans-serif" font-size="12.5" fill="#00599e" stroke="#00599e" stroke-width="0.250">8,0</text>
<text transform="translate(21.30,192.60) scale(0.8576,1)" font-family="Liberation Sans, sans-serif" font-size="12.5" fill="#00599e" stroke="#00599e" stroke-width="0.250">6,0</text>
<text transform="translate(21.30,249.60) scale(0.8576,1)" font-family="Liberation Sans, sans-serif" font-size="12.5" fill="#00599e" stroke="#00599e" stroke-width="0.250">4,0</text>
<text transform="translate(21.30,306.60) scale(0.8576,1)" font-family="Liberation Sans, sans-serif" font-size="12.5" fill="#00599e" stroke="#00599e" stroke-width="0.250">2,0</text>
<text transform="translate(21.30,363.60) scale(0.8576,1)" font-family="Liberation Sans, sans-serif" font-size="12.5" fill="#00599e" stroke="#00599e" stroke-width="0.250">0,0</text>
<text transform="translate(17.80,420.60) scale(0.8546,1)" font-family="Liberation Sans, sans-serif" font-size="12.5" fill="#00599e" stroke="#00599e" stroke-width="0.250">-2,0</text>
<text transform="translate(17.80,477.60) scale(0.8546,1)" font-family="Liberation Sans, sans-serif" font-size="12.5" fill="#00599e" stroke="#00599e" stroke-width="0.250">-4,0</text>
<text transform="translate(17.80,534.60) scale(0.8546,1)" font-family="Liberation Sans, sans-serif" font-size="12.5" fill="#00599e" stroke="#00599e" stroke-width="0.250">-6,0</text>
<text transform="translate(17.80,591.60) scale(0.8546,1)" font-family="Liberation Sans, sans-serif" font-size="12.5" fill="#00599e" stroke="#00599e" stroke-width="0.250">-8,0</text>
<text transform="translate(29.50,96.50) scale(0.8989,1)" font-family="Liberation Sans, sans-serif" font-size="12.5" fill="#00599e" stroke="#00599e" stroke-width="0.250">V</text>
<text transform="translate(14.70,79.80) scale(0.8832,1)" font-family="Liberation Sans, sans-serif" font-size="12.5" fill="#00599e" stroke="#00599e" stroke-width="0.250">10,0</text>
<text transform="translate(11.20,648.60) scale(0.8772,1)" font-family="Liberation Sans, sans-serif" font-size="12.5" fill="#00599e" stroke="#00599e" stroke-width="0.250">-10,0</text>
<text transform="translate(95.50,658.80) scale(0.9861,1)" font-family="Liberation Sans, sans-serif" font-size="12" fill="#111" stroke="#111" stroke-width="0.250">0,0 ms</text>
<text transform="translate(228.30,658.80) scale(0.8633,1)" font-family="Liberation Sans, sans-serif" font-size="12" fill="#111" stroke="#111" stroke-width="0.250">1,0</text>
<text transform="translate(360.30,658.80) scale(0.8633,1)" font-family="Liberation Sans, sans-serif" font-size="12" fill="#111" stroke="#111" stroke-width="0.250">2,0</text>
<text transform="translate(493.30,658.80) scale(0.8633,1)" font-family="Liberation Sans, sans-serif" font-size="12" fill="#111" stroke="#111" stroke-width="0.250">3,0</text>
<text transform="translate(625.30,658.80) scale(0.8633,1)" font-family="Liberation Sans, sans-serif" font-size="12" fill="#111" stroke="#111" stroke-width="0.250">4,0</text>
<text transform="translate(757.30,658.80) scale(0.8633,1)" font-family="Liberation Sans, sans-serif" font-size="12" fill="#111" stroke="#111" stroke-width="0.250">5,0</text>
<text transform="translate(889.30,658.80) scale(0.8633,1)" font-family="Liberation Sans, sans-serif" font-size="12" fill="#111" stroke="#111" stroke-width="0.250">6,0</text>
<text transform="translate(1022.30,658.80) scale(0.8633,1)" font-family="Liberation Sans, sans-serif" font-size="12" fill="#111" stroke="#111" stroke-width="0.250">7,0</text>
<text transform="translate(1154.30,658.80) scale(0.8633,1)" font-family="Liberation Sans, sans-serif" font-size="12" fill="#111" stroke="#111" stroke-width="0.250">8,0</text>
<text transform="translate(1286.30,658.80) scale(0.8633,1)" font-family="Liberation Sans, sans-serif" font-size="12" fill="#111" stroke="#111" stroke-width="0.250">9,0</text>
<text transform="translate(37.80,393.00) scale(0.9134,1)" font-family="Liberation Sans, sans-serif" font-size="12" fill="#00599e" stroke="#00599e" stroke-width="0.250">MODBUS RTU - Ch A</text></svg>
<svg class="abs" style="left:0;top:0" width="1375" height="790" viewBox="0 0 1375 790"><defs><clipPath id="pclip" clipPathUnits="userSpaceOnUse"><rect x="-5" y="-40" width="40" height="45.300"/></clipPath></defs><rect x="1255" y="36.500" width="15.600" height="1.600" fill="#8a8a8a"/><text transform="translate(26.40,21.90) scale(1.0001,1)" font-family="Liberation Sans, sans-serif" font-size="11.5" fill="#444">Oszilloskop</text>
<text transform="translate(27.20,53.60) scale(1.0638,1)" font-family="Liberation Sans, sans-serif" font-size="12.5" fill="#00599e">1 ms/div</text>
<text transform="translate(116.00,18.80) scale(0.9372,1)" font-family="Liberation Sans, sans-serif" font-size="9.1" fill="#444">Abtastung</text>
<text transform="translate(127.00,30.80) scale(0.9295,1)" font-family="Liberation Sans, sans-serif" font-size="8.8" font-weight="bold" fill="#00599e">96,2 kS</text>
<text transform="translate(116.30,42.70) scale(0.9090,1)" font-family="Liberation Sans, sans-serif" font-size="9.1" fill="#444">Abtastrate</text>
<text transform="translate(113.10,54.30) scale(0.9055,1)" font-family="Liberation Sans, sans-serif" font-size="9.1" fill="#00599e">~9,62 MS/s</text>
<text transform="translate(212.60,22.10) scale(1.0335,1)" font-family="Liberation Sans, sans-serif" font-size="11.5" fill="#444">Trigger</text>
<text transform="translate(214.90,53.60) scale(0.8960,1)" font-family="Liberation Sans, sans-serif" font-size="12.5" fill="#00599e">2 V</text>
<text transform="translate(304.00,19.00) scale(0.7738,1)" font-family="Liberation Sans, sans-serif" font-size="9.1" fill="#00599e">A</text>
<text transform="translate(315.70,30.70) scale(0.8166,1)" font-family="Liberation Sans, sans-serif" font-size="9.1" fill="#00599e">5 %</text>
<text transform="translate(278.90,43.00) scale(0.8526,1)" font-family="Liberation Sans, sans-serif" font-size="9.1" fill="#00599e">Einfache Fla...</text>
<text transform="translate(302.60,54.70) scale(0.8677,1)" font-family="Liberation Sans, sans-serif" font-size="9.1" fill="#00599e">Einzeln</text>
<text transform="translate(392.20,22.10) scale(1.0438,1)" font-family="Liberation Sans, sans-serif" font-size="11.5" fill="#444">Wellenform</text>
<text transform="translate(420.75,39.70) scale(0.7200,1)" font-family="Liberation Sans, sans-serif" font-size="10.5" fill="#00599e">1</text>
<text transform="translate(412.70,53.00) scale(0.8351,1)" font-family="Liberation Sans, sans-serif" font-size="9.1" fill="#00599e">von 1</text>
<text transform="translate(501.10,49.70) scale(0.9758,1)" font-family="Liberation Sans, sans-serif" font-size="9.2" fill="#1b66ab">Instrumente</text>
<text transform="translate(563.40,43.90) scale(0.9130,1)" font-family="Liberation Sans, sans-serif" font-size="9.2" fill="#1b66ab">Automatische</text>
<text transform="translate(568.70,55.60) scale(0.9104,1)" font-family="Liberation Sans, sans-serif" font-size="9.2" fill="#1b66ab">Einrichtung</text>
<text transform="translate(635.40,43.90) scale(0.8735,1)" font-family="Liberation Sans, sans-serif" font-size="9.2" fill="#1b66ab">Standard-</text>
<text transform="translate(627.70,55.60) scale(0.9451,1)" font-family="Liberation Sans, sans-serif" font-size="9.2" fill="#1b66ab">konfiguration</text>
<text transform="translate(703.40,49.80) scale(0.9650,1)" font-family="Liberation Sans, sans-serif" font-size="9.2" fill="#1b66ab">Öffnen</text>
<text transform="translate(762.20,49.80) scale(0.9150,1)" font-family="Liberation Sans, sans-serif" font-size="9.2" fill="#1b66ab">Speichern</text>
<text transform="translate(829.40,49.80) scale(0.9169,1)" font-family="Liberation Sans, sans-serif" font-size="9.2" fill="#1b66ab">Drucken</text>
<text transform="translate(902.20,49.80) scale(0.9505,1)" font-family="Liberation Sans, sans-serif" font-size="9.2" fill="#1b66ab">Voll</text>
<text transform="translate(1255.30,32.00) scale(1.1389,1)" font-family="Liberation Serif, serif" font-size="36" fill="#8a8a8a" stroke="#8a8a8a" stroke-width="0.7" clip-path="url(#pclip)">p</text>
<text transform="translate(1288.70,32.00) scale(1.1612,1)" font-family="Liberation Serif, serif" font-size="36" fill="#8a8a8a" stroke="#8a8a8a" stroke-width="0.7">i</text>
<text transform="translate(1306.00,32.00) scale(1.5418,1)" font-family="Liberation Serif, serif" font-size="36" fill="#8a8a8a" stroke="#8a8a8a" stroke-width="0.7">c</text>
<text transform="translate(1337.30,32.00) scale(1.5556,1)" font-family="Liberation Serif, serif" font-size="36" fill="#8a8a8a" stroke="#8a8a8a" stroke-width="0.7">o</text>
<text transform="translate(1363.50,16.00) scale(1.1299,1)" font-family="Liberation Sans, sans-serif" font-size="6" fill="#8a8a8a">®</text>
<text transform="translate(1301.00,57.90) scale(1.1953,1)" font-family="Liberation Serif, serif" font-size="10" font-weight="bold" fill="#adadad">Technology</text>
<text transform="translate(646.50,683.40) scale(0.9652,1)" font-family="Liberation Sans, sans-serif" font-size="11" fill="#1565b0">MODBUS RTU -...</text>
<text transform="translate(41.60,711.80) scale(1.0472,1)" font-family="Liberation Sans, sans-serif" font-size="11.3" fill="#1b64a8">Export</text>
<text transform="translate(127.60,711.80) scale(1.0043,1)" font-family="Liberation Sans, sans-serif" font-size="11.3" fill="#1b64a8">Daten zu Text</text>
<text transform="translate(250.70,711.80) scale(0.9989,1)" font-family="Liberation Sans, sans-serif" font-size="11.3" fill="#1b64a8">Felder</text>
<text transform="translate(309.50,715.90) scale(0.9759,1)" font-family="Liberation Sans, sans-serif" font-size="21.7" font-weight="bold" fill="#0b5697">A</text>
<text transform="translate(353.20,715.90) scale(0.9491,1)" font-family="Liberation Sans, sans-serif" font-size="17.5" font-weight="bold" fill="#0b5697">A</text>
<text transform="translate(409.50,711.80) scale(1.0644,1)" font-family="Liberation Sans, sans-serif" font-size="11" fill="#fff">Alle Puffer</text>
<text transform="translate(484.50,711.80) scale(1.0868,1)" font-family="Liberation Sans, sans-serif" font-size="11" fill="#1b64a8">Derzeitiger Puffer</text>
<text transform="translate(915.40,711.80) scale(1.0838,1)" font-family="Liberation Sans, sans-serif" font-size="11" fill="#1b64a8">Filter hinzu</text>
<text transform="translate(988.10,712.40) scale(1.0032,1)" font-family="Liberation Sans, sans-serif" font-size="11" fill="#444">Suchen:</text>
<text transform="translate(1039.90,712.40) scale(1.0308,1)" font-family="Liberation Sans, sans-serif" font-size="11" fill="#1b64a8">Alle Felder</text>
<text transform="translate(1167.20,712.00) scale(1.0817,1)" font-family="Liberation Sans, sans-serif" font-size="11" fill="#8c8c8c">[Wert eingeben]</text>
<text transform="translate(20.80,741.00) scale(1.0182,1)" font-family="Liberation Sans, sans-serif" font-size="11" font-weight="bold" fill="#fff">Buffer Number</text>
<text transform="translate(107.70,766.50) scale(0.7200,1)" font-family="Liberation Sans, sans-serif" font-size="11" fill="#b01818">1</text>
<text transform="translate(133.80,741.00) scale(0.9697,1)" font-family="Liberation Sans, sans-serif" font-size="11" font-weight="bold" fill="#fff">Packet</text>
<text transform="translate(176.70,766.50) scale(0.7200,1)" font-family="Liberation Sans, sans-serif" font-size="11" fill="#b01818">1</text>
<text transform="translate(202.80,741.00) scale(0.9963,1)" font-family="Liberation Sans, sans-serif" font-size="11" font-weight="bold" fill="#fff">Start Time</text>
<text transform="translate(228.20,766.50) scale(0.9831,1)" font-family="Liberation Sans, sans-serif" font-size="11" fill="#b01818">20,37 ns</text>
<text transform="translate(290.80,741.00) scale(0.9410,1)" font-family="Liberation Sans, sans-serif" font-size="11" font-weight="bold" fill="#fff">End Time</text>
<text transform="translate(307.70,766.50) scale(0.9505,1)" font-family="Liberation Sans, sans-serif" font-size="11" fill="#b01818">8,128 ms</text>
<text transform="translate(371.80,741.00) scale(0.9987,1)" font-family="Liberation Sans, sans-serif" font-size="11" font-weight="bold" fill="#fff">Master</text>
<text transform="translate(441.80,741.00) scale(0.9435,1)" font-family="Liberation Sans, sans-serif" font-size="11" font-weight="bold" fill="#fff">Slave ID</text>
<text transform="translate(433.30,766.50) scale(0.8721,1)" font-family="Liberation Sans, sans-serif" font-size="11" fill="#b01818">7F</text>
<text transform="translate(516.80,741.00) scale(0.9774,1)" font-family="Liberation Sans, sans-serif" font-size="11" font-weight="bold" fill="#fff">Function</text>
<text transform="translate(508.30,766.50) scale(0.8955,1)" font-family="Liberation Sans, sans-serif" font-size="11" fill="#b01818">7F</text>
<text transform="translate(596.80,741.00) scale(0.9585,1)" font-family="Liberation Sans, sans-serif" font-size="11" font-weight="bold" fill="#fff">Exception</text>
<text transform="translate(681.80,741.00) scale(1.0617,1)" font-family="Liberation Sans, sans-serif" font-size="11" font-weight="bold" fill="#fff">Data</text>
<text transform="translate(673.30,766.50) scale(0.9024,1)" font-family="Liberation Sans, sans-serif" font-size="11" fill="#b01818">CF FF FD</text>
<text transform="translate(741.80,741.00) scale(0.8137,1)" font-family="Liberation Sans, sans-serif" font-size="11" font-weight="bold" fill="#fff">CRC</text>
<text transform="translate(733.30,766.50) scale(0.9627,1)" font-family="Liberation Sans, sans-serif" font-size="11" fill="#b01818">05 65</text>
<text transform="translate(795.80,741.00) scale(0.9811,1)" font-family="Liberation Sans, sans-serif" font-size="11" font-weight="bold" fill="#fff">Parity Check</text>
<text transform="translate(895.80,741.00) scale(1.0113,1)" font-family="Liberation Sans, sans-serif" font-size="11" font-weight="bold" fill="#fff">Valid Start</text>
<text transform="translate(984.80,741.00) scale(0.9576,1)" font-family="Liberation Sans, sans-serif" font-size="11" font-weight="bold" fill="#fff">Valid End</text>
<text transform="translate(1066.80,741.00) scale(0.9205,1)" font-family="Liberation Sans, sans-serif" font-size="11" font-weight="bold" fill="#fff">Valid CRC</text>
<text transform="translate(1149.80,741.00) scale(0.9654,1)" font-family="Liberation Sans, sans-serif" font-size="11" font-weight="bold" fill="#fff">Valid Gap</text>
<text transform="translate(1232.80,741.00) scale(0.9500,1)" font-family="Liberation Sans, sans-serif" font-size="11" font-weight="bold" fill="#fff">Valid</text></svg>
</body></html>
